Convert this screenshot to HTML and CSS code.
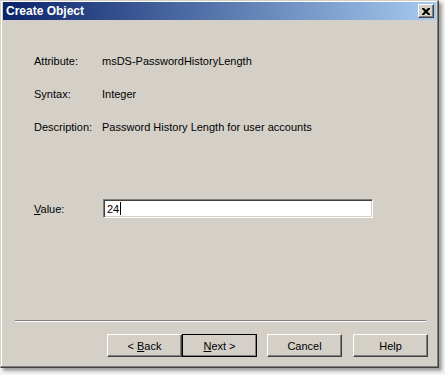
FILE: index.html
```html
<!DOCTYPE html>
<html>
<head>
<meta charset="utf-8">
<link rel="stylesheet" href="styles.css">
</head>
<body>
<div class="window">
  <div class="titlebar">
    <span class="title">Create Object</span>
    <span class="close"><svg width="8" height="7" viewBox="0 0 8 7"><path d="M0 0h2l2 2 2-2h2v1l-2.5 2.5L8 6v1H6L4 5 2 7H0V6l2.5-2.5L0 1z" fill="#000"/></svg></span>
  </div>
  <div class="body">
    <div class="info">
      <div class="row"><span class="label">Attribute:</span><span>msDS-PasswordHistoryLength</span></div>
      <div class="row"><span class="label">Syntax:</span><span>Integer</span></div>
      <div class="row"><span class="label">Description:</span><span>Password History Length for user accounts</span></div>
    </div>
    <div class="row value-row"><span class="label"><u>V</u>alue:</span><span class="input">24<span class="caret"></span></span></div>
    <div class="spacer"></div>
    <div class="sep"></div>
    <div class="buttons">
      <span class="btn">&lt;&nbsp;<u>B</u>ack</span>
      <span class="btn default"><u>N</u>ext&nbsp;&gt;</span>
      <span class="btn cancel">Cancel</span>
      <span class="btn help">Help</span>
    </div>
  </div>
</div>
</body>
</html>
```
FILE: styles.css
```css
html, body { margin: 0; padding: 0; }
body {
  width: 445px; height: 375px;
  background: #f4f4f4;
  font-family: "Liberation Sans", Arial, sans-serif;
  font-size: 11px;
  color: #000;
  overflow: hidden;
}
.window {
  box-sizing: border-box;
  width: 439px; height: 368px;
  background: #d4d0c8;
  border: 1px solid;
  border-color: #d4d0c8 #404040 #404040 #d4d0c8;
  box-shadow: inset -1px -1px 0 #808080, inset 1px 1px 0 #fff, 3px 3px 3px rgba(0,0,0,0.35);
  padding: 1px 2px 2px 2px;
  display: flex; flex-direction: column;
}
.titlebar {
  height: 18px;
  background: linear-gradient(to right, #0a246a, #a6caf0);
  display: flex; align-items: center; justify-content: space-between;
  padding: 0 2px 0 3px;
}
.title {
  color: #fff; font-weight: bold; font-size: 12px;
  font-family: "Liberation Sans", Arial, sans-serif;
}
.close {
  box-sizing: border-box;
  width: 16px; height: 14px;
  background: #d4d0c8;
  border: 1px solid; border-color: #fff #404040 #404040 #fff;
  box-shadow: inset -1px -1px 0 #808080;
  display: flex; align-items: center; justify-content: center;
}
.body {
  flex: 1;
  display: flex; flex-direction: column;
  padding: 34px 7px 8px 11px;
}
.info { display: flex; flex-direction: column; gap: 19px; }
.row { display: flex; align-items: center; height: 14px; padding-left: 20px; }
.label { width: 68px; flex: none; }
.value-row { margin-top: 65px; height: 19px; }
.input {
  box-sizing: border-box;
  width: 270px; height: 19px;
  background: #fff;
  border: 1px solid; border-color: #808080 #fff #fff #808080;
  box-shadow: inset 1px 1px 0 #404040, inset -1px -1px 0 #d4d0c8;
  padding: 0 3px;
  display: flex; align-items: center;
  margin-left: 1px;
}
.caret { width: 1px; height: 13px; background: #000; margin-left: 1px; }
.spacer { flex: 1; }
.sep { height: 0; border-top: 1px solid #808080; border-bottom: 1px solid #fff; margin: 0 3px 12px 1px; }
.buttons { display: flex; justify-content: flex-end; padding-right: 1px; }
.btn {
  box-sizing: border-box;
  width: 75px; height: 23px;
  border: 1px solid; border-color: #fff #404040 #404040 #fff;
  box-shadow: inset -1px -1px 0 #808080;
  display: flex; align-items: center; justify-content: center;
}
.btn.default { outline: 1px solid #000; outline-offset: -1px; }
.btn.cancel { margin-left: 10px; }
.btn.help { margin-left: 11px; }
```
